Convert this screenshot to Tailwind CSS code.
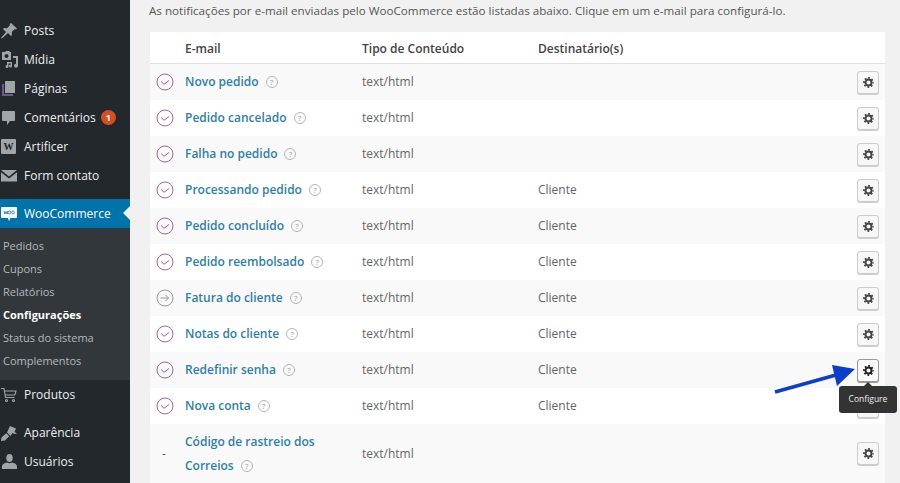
<!DOCTYPE html>
<html lang="pt-BR">
<head>
    <meta charset="UTF-8">
    <title>Configurações de e-mail</title>
    <script src="https://cdn.jsdelivr.net/npm/@tailwindcss/browser@4"></script>
</head>
<body class="bg-[#f1f1f1] font-['Open_Sans',sans-serif] overflow-hidden">

<!-- icones repetidos da tabela -->
<svg class="hidden">
    <symbol id="check" viewBox="0 0 18 18"><g fill="none" stroke="#a46497" stroke-width="1"><circle cx="9" cy="9" r="8"/><path d="M5 8.500l3 2.800 5-3.800"/></g></symbol>
    <symbol id="gear" viewBox="0 0 20 20"><g fill="none" stroke="currentColor"><circle cx="10" cy="10" r="5.500" stroke-width="3.600"/><circle cx="10" cy="10" r="8.200" stroke-width="3.200" stroke-dasharray="3.220 3.220" stroke-dashoffset="1.610"/></g></symbol>
</svg>

<div class="relative flex h-[483px] w-[900px] overflow-hidden">

    <!-- MENU LATERAL -->
    <aside class="w-[130px] shrink-0 bg-[#23282d] text-[12px] text-[#eeeeee] pt-[16px]">
        <div class="flex h-[29px] items-center">
            <svg class="ml-[1px] w-[16px] h-[16px] text-[#a0a5aa]" viewBox="0 0 16 16" fill="currentColor"><path d="M10 0l6 5.500-1 1-1.200-.5-3 3 .2 3-1 1-3-3L1 15.500 0 15l5-6-3-3 1-1 3 .2 3-3-.5-1.200z"/></svg>
            <span class="ml-[7px]">Posts</span>
        </div>
        <div class="flex h-[29px] items-center">
            <svg class="ml-[1px] w-[17px] h-[17px] text-[#a0a5aa]" viewBox="0 0 17 17" fill="currentColor"><path d="M1 1h3l1-1h3l1 1h1v8H1zm4.500 2a2 2 0 100 4 2 2 0 000-4z" fill-rule="evenodd"/><path d="M12 5h5v9.500a2 2 0 11-2-1.800V7h-3zM6 11h5v4a1.500 1.500 0 11-1.500-1.500h.5V12.500H7.500V15.500A1.500 1.500 0 116 14z"/></svg>
            <span class="ml-[6px]">Mídia</span>
        </div>
        <div class="flex h-[29px] items-center">
            <svg class="ml-[1px] w-[16px] h-[17px]" viewBox="0 0 16 17"><path d="M1 4h2v10h9v2H1z" fill="#6b5a8c"/><path d="M4 1h10v12H4z" fill="#a0a5aa"/></svg>
            <span class="ml-[7px]">Páginas</span>
        </div>
        <div class="flex h-[29px] items-center">
            <svg class="ml-[1px] w-[16px] h-[16px] text-[#a0a5aa]" viewBox="0 0 16 16" fill="currentColor"><path d="M2 1h11a1 1 0 011 1v8a1 1 0 01-1 1H9l-3 4v-4H2a1 1 0 01-1-1V2a1 1 0 011-1z"/></svg>
            <span class="ml-[7px]">Comentários</span>
            <span class="ml-[5px] flex h-[15px] w-[15px] items-center justify-center rounded-full bg-[#d54e21] text-[9px] font-bold text-white">1</span>
        </div>
        <div class="flex h-[29px] items-center">
            <span class="ml-[1px] flex h-[15px] w-[15px] items-center justify-center rounded-[1px] bg-[#a0a5aa] font-['Liberation_Serif',serif] text-[10px] font-bold text-[#23282d]">W</span>
            <span class="ml-[8px]">Artificer</span>
        </div>
        <div class="flex h-[29px] items-center">
            <svg class="ml-[1px] w-[16px] h-[12px] text-[#a0a5aa]" viewBox="0 0 16 12" fill="currentColor"><path d="M0 0h16l-8 6.500zM0 2.200l8 6.300 8-6.300V11.500H0z"/></svg>
            <span class="ml-[7px]">Form contato</span>
        </div>

        <div class="relative mt-[9px] flex h-[29px] items-center bg-[#0073aa] text-white">
            <svg class="ml-[1px] w-[16px] h-[16px]" viewBox="0 0 16 16"><path d="M1 1h14a1 1 0 011 1v9a1 1 0 01-1 1H9.500L8 15l-1-3H1a1 1 0 01-1-1V2a1 1 0 011-1z" fill="#fff"/><path d="M3 5l.8 3L5 5.500 6 8l.8-3M8.500 5a1.300 1.500 0 100 3 1.300 1.500 0 000-3zM12 5a1.300 1.500 0 100 3 1.300 1.500 0 000-3z" fill="none" stroke="#0073aa" stroke-width=".8"/></svg>
            <span class="ml-[7px]">WooCommerce</span>
            <div class="absolute right-0 top-[7px] h-0 w-0 border-y-[7px] border-r-[7px] border-y-transparent border-r-[#f1f1f1]"></div>
        </div>
        <div class="bg-[#32373c] pt-[7px] pb-[7px] text-[11px] text-[#b4b9be]">
            <div class="flex h-[23px] items-center pl-[3px]">Pedidos</div>
            <div class="flex h-[23px] items-center pl-[3px]">Cupons</div>
            <div class="flex h-[23px] items-center pl-[3px]">Relatórios</div>
            <div class="flex h-[23px] items-center pl-[3px] font-bold text-white">Configurações</div>
            <div class="flex h-[23px] items-center pl-[3px]">Status do sistema</div>
            <div class="flex h-[23px] items-center pl-[3px]">Complementos</div>
        </div>

        <div class="flex h-[29px] items-center">
            <svg class="ml-[1px] w-[16px] h-[16px] text-[#a0a5aa]" viewBox="0 0 16 16" fill="none" stroke="currentColor" stroke-width="1.100"><path d="M0 1.500h3l1.500 9h9M3.500 4h11.500l-1.200 4H4.200"/><circle cx="5.500" cy="13.500" r="1"/><circle cx="12.500" cy="13.500" r="1"/></svg>
            <span class="ml-[7px]">Produtos</span>
        </div>
        <div class="mt-[9px] flex h-[29px] items-center">
            <svg class="ml-[1px] w-[16px] h-[16px] text-[#a0a5aa]" viewBox="0 0 16 16" fill="currentColor"><path d="M9 1l6 2.500-1.500 3.500L16 8.500 14 9l-2.500-1L9.500 11 6 7.500zM5.300 8.300l2.900 3L4 15.500 0 16l.5-3.500z"/></svg>
            <span class="ml-[7px]">Aparência</span>
        </div>
        <div class="flex h-[29px] items-center">
            <svg class="ml-[2px] w-[15px] h-[15px] text-[#a0a5aa]" viewBox="0 0 15 15" fill="currentColor"><ellipse cx="7.500" cy="4" rx="3.200" ry="4"/><path d="M0 15v-2.500C0 10 3 9 5 8.500c1.500 1 3.500 1 5 0 2 .5 5 1.500 5 4V15z"/></svg>
            <span class="ml-[7px]">Usuários</span>
        </div>
    </aside>

    <!-- CONTEUDO -->
    <main class="min-w-0 flex-1 pl-[20px] pr-[15px]">
        <p class="-ml-[1px] h-[32px] pt-[2px] text-[11.650px] leading-[18px] text-[#555555] whitespace-nowrap">As notificações por e-mail enviadas pelo WooCommerce estão listadas abaixo. Clique em um e-mail para configurá-lo.</p>

        <div class="border-b border-[#e5e5e5] bg-white text-[12px] text-[#666666]">
            <div class="grid h-[32px] grid-cols-[35px_177px_176px_1fr] items-center border-b border-[#e1e1e1] pt-[2px] font-semibold text-[#444444]">
                <div></div><div>E-mail</div><div>Tipo de Conteúdo</div><div>Destinatário(s)</div>
            </div>

            <div class="grid h-[36px] grid-cols-[35px_177px_176px_1fr_auto] items-center bg-[#f9f9f9] pr-[6px]">
                <svg class="ml-[6px] h-[18px] w-[18px]"><use href="#check"/></svg>
                <div class="flex items-center"><a class="font-semibold text-[#2e7fa8]">Novo pedido</a><span class="ml-[7px] flex h-[12px] w-[12px] items-center justify-center rounded-full border border-[#b5b5b5] text-[8px] text-[#999999]">?</span></div>
                <div>text/html</div><div></div>
                <button class="flex h-[23px] w-[22px] items-center justify-center rounded-[3px] border border-[#cccccc] bg-[#f7f7f7] text-[#444444] shadow-[0_1px_0_#cccccc]"><svg class="h-[11px] w-[11px]"><use href="#gear"/></svg></button>
            </div>
            <div class="grid h-[36px] grid-cols-[35px_177px_176px_1fr_auto] items-center bg-white pr-[6px]">
                <svg class="ml-[6px] h-[18px] w-[18px]"><use href="#check"/></svg>
                <div class="flex items-center"><a class="font-semibold text-[#2e7fa8]">Pedido cancelado</a><span class="ml-[7px] flex h-[12px] w-[12px] items-center justify-center rounded-full border border-[#b5b5b5] text-[8px] text-[#999999]">?</span></div>
                <div>text/html</div><div></div>
                <button class="flex h-[23px] w-[22px] items-center justify-center rounded-[3px] border border-[#cccccc] bg-[#f7f7f7] text-[#444444] shadow-[0_1px_0_#cccccc]"><svg class="h-[11px] w-[11px]"><use href="#gear"/></svg></button>
            </div>
            <div class="grid h-[36px] grid-cols-[35px_177px_176px_1fr_auto] items-center bg-[#f9f9f9] pr-[6px]">
                <svg class="ml-[6px] h-[18px] w-[18px]"><use href="#check"/></svg>
                <div class="flex items-center"><a class="font-semibold text-[#2e7fa8]">Falha no pedido</a><span class="ml-[7px] flex h-[12px] w-[12px] items-center justify-center rounded-full border border-[#b5b5b5] text-[8px] text-[#999999]">?</span></div>
                <div>text/html</div><div></div>
                <button class="flex h-[23px] w-[22px] items-center justify-center rounded-[3px] border border-[#cccccc] bg-[#f7f7f7] text-[#444444] shadow-[0_1px_0_#cccccc]"><svg class="h-[11px] w-[11px]"><use href="#gear"/></svg></button>
            </div>
            <div class="grid h-[36px] grid-cols-[35px_177px_176px_1fr_auto] items-center bg-white pr-[6px]">
                <svg class="ml-[6px] h-[18px] w-[18px]"><use href="#check"/></svg>
                <div class="flex items-center"><a class="font-semibold text-[#2e7fa8]">Processando pedido</a><span class="ml-[7px] flex h-[12px] w-[12px] items-center justify-center rounded-full border border-[#b5b5b5] text-[8px] text-[#999999]">?</span></div>
                <div>text/html</div><div>Cliente</div>
                <button class="flex h-[23px] w-[22px] items-center justify-center rounded-[3px] border border-[#cccccc] bg-[#f7f7f7] text-[#444444] shadow-[0_1px_0_#cccccc]"><svg class="h-[11px] w-[11px]"><use href="#gear"/></svg></button>
            </div>
            <div class="grid h-[36px] grid-cols-[35px_177px_176px_1fr_auto] items-center bg-[#f9f9f9] pr-[6px]">
                <svg class="ml-[6px] h-[18px] w-[18px]"><use href="#check"/></svg>
                <div class="flex items-center"><a class="font-semibold text-[#2e7fa8]">Pedido concluído</a><span class="ml-[7px] flex h-[12px] w-[12px] items-center justify-center rounded-full border border-[#b5b5b5] text-[8px] text-[#999999]">?</span></div>
                <div>text/html</div><div>Cliente</div>
                <button class="flex h-[23px] w-[22px] items-center justify-center rounded-[3px] border border-[#cccccc] bg-[#f7f7f7] text-[#444444] shadow-[0_1px_0_#cccccc]"><svg class="h-[11px] w-[11px]"><use href="#gear"/></svg></button>
            </div>
            <div class="grid h-[36px] grid-cols-[35px_177px_176px_1fr_auto] items-center bg-white pr-[6px]">
                <svg class="ml-[6px] h-[18px] w-[18px]"><use href="#check"/></svg>
                <div class="flex items-center"><a class="font-semibold text-[#2e7fa8]">Pedido reembolsado</a><span class="ml-[7px] flex h-[12px] w-[12px] items-center justify-center rounded-full border border-[#b5b5b5] text-[8px] text-[#999999]">?</span></div>
                <div>text/html</div><div>Cliente</div>
                <button class="flex h-[23px] w-[22px] items-center justify-center rounded-[3px] border border-[#cccccc] bg-[#f7f7f7] text-[#444444] shadow-[0_1px_0_#cccccc]"><svg class="h-[11px] w-[11px]"><use href="#gear"/></svg></button>
            </div>
            <div class="grid h-[36px] grid-cols-[35px_177px_176px_1fr_auto] items-center bg-[#f9f9f9] pr-[6px]">
                <svg class="ml-[6px] h-[18px] w-[18px]" viewBox="0 0 18 18" fill="none" stroke="#999999" stroke-width="1"><circle cx="9" cy="9" r="8"/><path d="M4.500 9h8M9.500 6l3 3-3 3"/></svg>
                <div class="flex items-center"><a class="font-semibold text-[#2e7fa8]">Fatura do cliente</a><span class="ml-[7px] flex h-[12px] w-[12px] items-center justify-center rounded-full border border-[#b5b5b5] text-[8px] text-[#999999]">?</span></div>
                <div>text/html</div><div>Cliente</div>
                <button class="flex h-[23px] w-[22px] items-center justify-center rounded-[3px] border border-[#cccccc] bg-[#f7f7f7] text-[#444444] shadow-[0_1px_0_#cccccc]"><svg class="h-[11px] w-[11px]"><use href="#gear"/></svg></button>
            </div>
            <div class="grid h-[36px] grid-cols-[35px_177px_176px_1fr_auto] items-center bg-white pr-[6px]">
                <svg class="ml-[6px] h-[18px] w-[18px]"><use href="#check"/></svg>
                <div class="flex items-center"><a class="font-semibold text-[#2e7fa8]">Notas do cliente</a><span class="ml-[7px] flex h-[12px] w-[12px] items-center justify-center rounded-full border border-[#b5b5b5] text-[8px] text-[#999999]">?</span></div>
                <div>text/html</div><div>Cliente</div>
                <button class="flex h-[23px] w-[22px] items-center justify-center rounded-[3px] border border-[#cccccc] bg-[#f7f7f7] text-[#444444] shadow-[0_1px_0_#cccccc]"><svg class="h-[11px] w-[11px]"><use href="#gear"/></svg></button>
            </div>
            <div class="grid h-[36px] grid-cols-[35px_177px_176px_1fr_auto] items-center bg-[#f9f9f9] pr-[6px]">
                <svg class="ml-[6px] h-[18px] w-[18px]"><use href="#check"/></svg>
                <div class="flex items-center"><a class="font-semibold text-[#2e7fa8]">Redefinir senha</a><span class="ml-[7px] flex h-[12px] w-[12px] items-center justify-center rounded-full border border-[#b5b5b5] text-[8px] text-[#999999]">?</span></div>
                <div>text/html</div><div>Cliente</div>
                <button class="flex h-[23px] w-[22px] items-center justify-center rounded-[3px] border border-[#999999] bg-[#fafafa] text-[#222222] shadow-[0_1px_0_#999999]"><svg class="h-[11px] w-[11px]"><use href="#gear"/></svg></button>
            </div>
            <div class="grid h-[36px] grid-cols-[35px_177px_176px_1fr_auto] items-center bg-white pr-[6px]">
                <svg class="ml-[6px] h-[18px] w-[18px]"><use href="#check"/></svg>
                <div class="flex items-center"><a class="font-semibold text-[#2e7fa8]">Nova conta</a><span class="ml-[7px] flex h-[12px] w-[12px] items-center justify-center rounded-full border border-[#b5b5b5] text-[8px] text-[#999999]">?</span></div>
                <div>text/html</div><div>Cliente</div>
                <button class="flex h-[23px] w-[22px] items-center justify-center rounded-[3px] border border-[#cccccc] bg-[#f7f7f7] text-[#444444] shadow-[0_1px_0_#cccccc]"><svg class="h-[11px] w-[11px]"><use href="#gear"/></svg></button>
            </div>
            <div class="grid h-[59px] grid-cols-[35px_177px_176px_1fr_auto] items-center bg-[#f9f9f9] pr-[6px]">
                <div class="pl-[12px] text-[#555555]">-</div>
                <div class="leading-[24px]">
                    <a class="block font-semibold text-[#2e7fa8]">Código de rastreio dos</a>
                    <div class="flex items-center"><a class="font-semibold text-[#2e7fa8]">Correios</a><span class="ml-[7px] flex h-[12px] w-[12px] items-center justify-center rounded-full border border-[#b5b5b5] text-[8px] leading-none text-[#999999]">?</span></div>
                </div>
                <div>text/html</div><div></div>
                <button class="flex h-[23px] w-[22px] items-center justify-center rounded-[3px] border border-[#cccccc] bg-[#f7f7f7] text-[#444444] shadow-[0_1px_0_#cccccc]"><svg class="h-[11px] w-[11px]"><use href="#gear"/></svg></button>
            </div>
        </div>
    </main>

    <!-- seta azul e tooltip por cima da tabela -->
    <svg class="absolute left-[770px] top-[360px] h-[40px] w-[90px]" viewBox="0 0 90 40"><path d="M5 32L66 15" stroke="#0a3ecb" stroke-width="3.500"/><path d="M62 5L85 9 67 26z" fill="#0a3ecb"/></svg>
    <div class="absolute left-[839px] top-[386px] flex h-[27px] w-[58px] items-center justify-center rounded-[3px] bg-[#333333] text-[8.500px] text-[#eeeeee]">Configure</div>
    <div class="absolute left-[864px] top-[382px] h-0 w-0 border-x-[4px] border-b-[4px] border-x-transparent border-b-[#333333]"></div>
</div>
</body>
</html>
